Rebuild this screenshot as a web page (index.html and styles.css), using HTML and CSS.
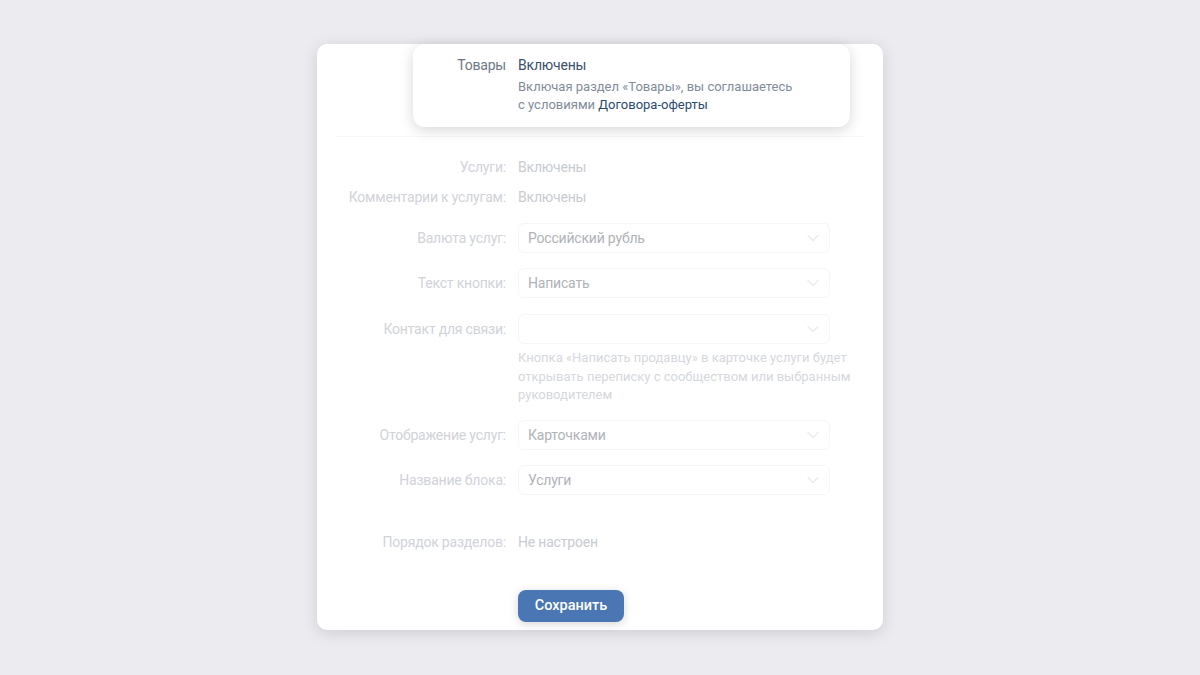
FILE: index.html
```html
<!DOCTYPE html>
<html lang="ru">
<head>
<meta charset="utf-8">
<link rel="stylesheet" href="styles.css">
</head>
<body>
<div class="card">
  <div class="card-top"></div>
  <div class="form">
    <div class="row text-row first">
      <div class="label">Услуги:</div>
      <div class="value">Включены</div>
    </div>
    <div class="row text-row">
      <div class="label">Комментарии к услугам:</div>
      <div class="value">Включены</div>
    </div>
    <div class="row select-row gap16">
      <div class="label">Валюта услуг:</div>
      <div class="select"><span>Российский рубль</span><svg class="chev" viewBox="0 0 12 8"><path d="M1 1.5l5 5 5-5" /></svg></div>
    </div>
    <div class="row select-row gap15">
      <div class="label">Текст кнопки:</div>
      <div class="select"><span>Написать</span><svg class="chev" viewBox="0 0 12 8"><path d="M1 1.5l5 5 5-5" /></svg></div>
    </div>
    <div class="row select-row gap16">
      <div class="label">Контакт для связи:</div>
      <div class="cell">
        <div class="select"><span></span><svg class="chev" viewBox="0 0 12 8"><path d="M1 1.5l5 5 5-5" /></svg></div>
        <div class="help">Кнопка «Написать продавцу» в карточке услуги будет открывать переписку с сообществом или выбранным руководителем</div>
      </div>
    </div>
    <div class="row select-row gap15">
      <div class="label">Отображение услуг:</div>
      <div class="select"><span>Карточками</span><svg class="chev" viewBox="0 0 12 8"><path d="M1 1.5l5 5 5-5" /></svg></div>
    </div>
    <div class="row select-row gap15">
      <div class="label">Название блока:</div>
      <div class="select"><span>Услуги</span><svg class="chev" viewBox="0 0 12 8"><path d="M1 1.5l5 5 5-5" /></svg></div>
    </div>
    <div class="row text-row gap37">
      <div class="label">Порядок разделов:</div>
      <div class="value">Не настроен</div>
    </div>
    <div class="row actions">
      <div class="label"></div>
      <button class="btn">Сохранить</button>
    </div>
  </div>

  <div class="popup">
    <div class="popup-label">Товары</div>
    <div class="popup-body">
      <div class="popup-value">Включены</div>
      <div class="popup-desc">Включая раздел «Товары», вы соглашаетесь<br>с условиями <span class="link">Договора-оферты</span></div>
    </div>
  </div>
</div>
</body>
</html>
```

FILE: styles.css
```css
* { box-sizing: border-box; }

html, body {
  margin: 0;
  padding: 0;
}

body {
  background: #ebebf0;
  font-family: Roboto, "Noto Sans", Arial, sans-serif;
  font-size: 14px;
  letter-spacing: -0.2px;
  width: 1200px;
  height: 675px;
  overflow: hidden;
}

.card {
  position: relative;
  width: 566px;
  margin: 44px 0 0 317px;
  background: #fff;
  border-radius: 10px;
  box-shadow: 0 3px 16px rgba(0, 0, 0, 0.13);
  padding: 0 0 8px 0;
}

.card-top {
  height: 93px;
  margin: 0 18px;
  border-bottom: 1px solid #f8f8fa;
}

.form {
  display: flex;
  flex-direction: column;
}

.row {
  display: flex;
  align-items: flex-start;
}

.label {
  width: 189px;
  flex: none;
  text-align: right;
  color: #d0d3d8;
  line-height: 20px;
  white-space: nowrap;
}

.value {
  margin-left: 12px;
  color: #c8cbd0;
  line-height: 20px;
}

.text-row { margin-top: 10px; }
.text-row.first { margin-top: 20px; }
.gap15 { margin-top: 15px; }
.gap16 { margin-top: 16px; }
.gap37 { margin-top: 37px; }

.select-row .label {
  line-height: 30px;
}

.cell {
  margin-left: 12px;
  width: 335px;
}

.select {
  margin-left: 12px;
  width: 312px;
  height: 30px;
  border: 1px solid #f6f6f8;
  border-radius: 6px;
  display: flex;
  align-items: center;
  justify-content: space-between;
  padding: 0 10px 0 9px;
  color: #b0b3b8;
}

.cell .select {
  margin-left: 0;
}

.chev {
  width: 12px;
  height: 8px;
  fill: none;
  stroke: #eaecef;
  stroke-width: 1.4;
  stroke-linecap: round;
  stroke-linejoin: round;
}

.help {
  margin-top: 5px;
  font-size: 13px;
  letter-spacing: 0;
  line-height: 18.5px;
  color: #d5d8dc;
}

.actions {
  margin-top: 38px;
}

.btn {
  margin-left: 12px;
  width: 106px;
  height: 32px;
  border: none;
  border-radius: 8px;
  background: #4a76b4;
  color: #fff;
  font-family: Roboto, "Noto Sans", Arial, sans-serif;
  font-size: 14.5px;
  font-weight: 500;
  letter-spacing: 0;
  box-shadow: 0 2px 10px rgba(0, 0, 0, 0.16);
  padding: 0;
}

.popup {
  position: absolute;
  left: 96px;
  top: 0;
  width: 437px;
  height: 83px;
  background: #fff;
  border-radius: 12px;
  box-shadow: 0 3px 14px rgba(0, 0, 0, 0.16);
  display: flex;
  padding-top: 11px;
}

.popup-label {
  width: 93px;
  flex: none;
  text-align: right;
  color: #6d7885;
  line-height: 20px;
}

.popup-body {
  margin-left: 12px;
}

.popup-value {
  color: #3a4f6b;
  line-height: 20px;
}

.popup-desc {
  margin-top: 3px;
  font-size: 13px;
  letter-spacing: 0;
  line-height: 18px;
  color: #818c99;
}

.link {
  color: #2a4a6e;
}
```
